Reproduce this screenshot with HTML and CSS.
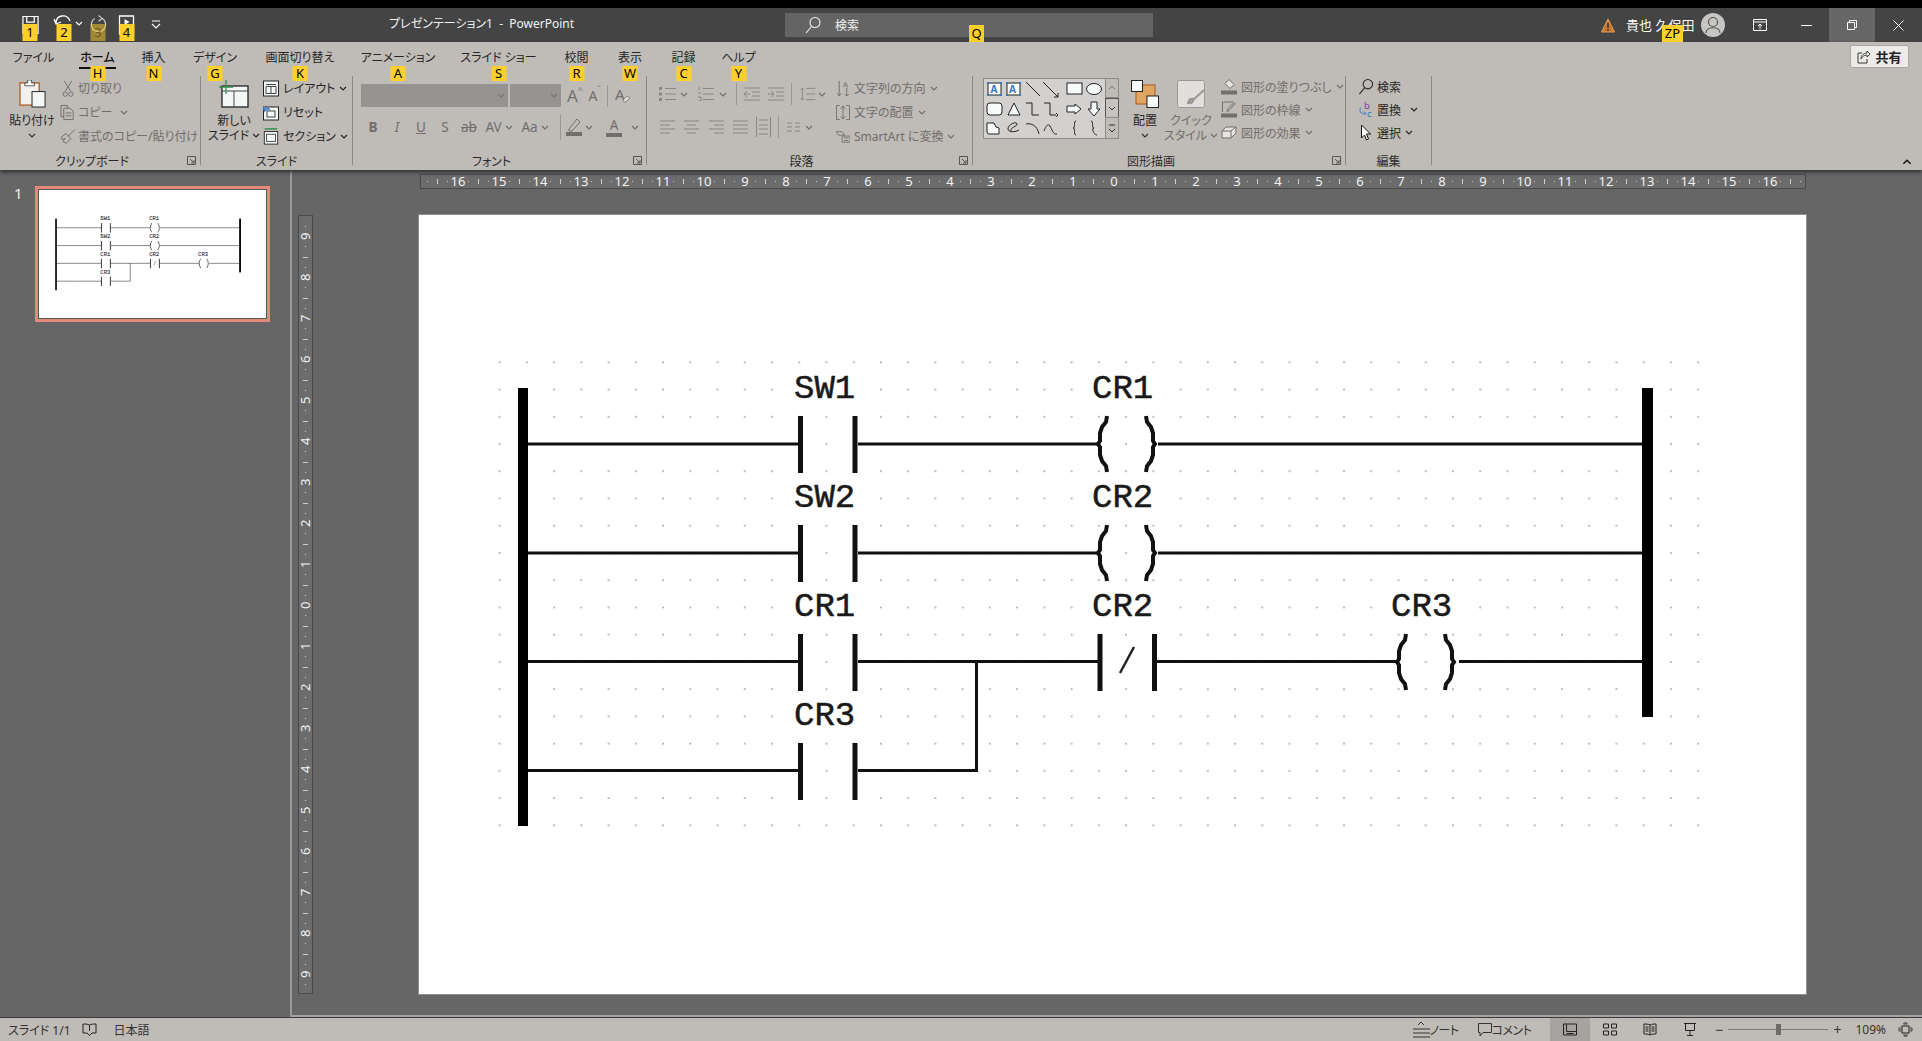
FILE: index.html
```html
<!DOCTYPE html>
<html lang="ja">
<head>
  <meta charset="UTF-8" />
  <title>プレゼンテーション1 - PowerPoint</title>
  <link rel="stylesheet" href="styles.css">
</head>
<body>

  <!-- icon sprite -->
  <svg class="sprite" xmlns="http://www.w3.org/2000/svg">
    <symbol id="ch" viewBox="0 0 8 5"><path d="M1 1l3 3 3-3" fill="none" stroke="currentColor" stroke-width="1.2"/></symbol>
    <symbol id="launch" viewBox="0 0 9 9"><path d="M.5 8.500V.5h8v8zM3 3l4 4M7 4v3H4" fill="none" stroke="currentColor"/></symbol>
    <symbol id="save" viewBox="0 0 18 20"><path d="M1 1h16v18H1zM5 1v6h8V1" fill="none" stroke="#fff" stroke-width="1.3"/></symbol>
    <symbol id="undo" viewBox="0 0 20 16"><path d="M3 11C3 3 14 1 17 9M1 7l2 5 5-2" fill="none" stroke="#fff" stroke-width="1.3"/></symbol>
    <symbol id="redo" viewBox="0 0 18 20"><path d="M5 3C-1 7 1 17 9 17S19 7 13 3M9 0l4 3-4 3" fill="none" stroke="#ccc" stroke-width="1.2"/></symbol>
    <symbol id="start" viewBox="0 0 16 20"><path d="M1 1h14v18H1z" fill="none" stroke="#fff" stroke-width="1.3"/><path d="M6 4l5 3-5 3z" fill="#fff"/></symbol>
    <symbol id="more" viewBox="0 0 10 10"><path d="M1 1h8M1 4l4 4 4-4" fill="none" stroke="#fff" stroke-width="1.2"/></symbol>
    <symbol id="mag" viewBox="0 0 16 18"><circle cx="10" cy="6.500" r="5" fill="none" stroke="currentColor" stroke-width="1.1"/><path d="M6.500 10.500L1 17" stroke="currentColor" stroke-width="1.1"/></symbol>
    <symbol id="warn" viewBox="0 0 14 15"><path d="M7 1l6.500 13H.5z" fill="#c9772f" stroke="#e39a52"/><path d="M7 5v5M7 11v2" stroke="#333" stroke-width="1.5"/></symbol>
    <symbol id="avatar" viewBox="0 0 24 24"><circle cx="12" cy="12" r="12" fill="#c8c6c4"/><circle cx="12" cy="9" r="4.500" fill="none" stroke="#555" stroke-width="1.2"/><path d="M5 20c0-7 14-7 14 0" fill="none" stroke="#555" stroke-width="1.2"/></symbol>
    <symbol id="ropt" viewBox="0 0 14 12"><path d="M.5.5h13v11H.5zM.5 3h13M7 10V5M5 7l2-2 2 2" fill="none" stroke="#fff"/></symbol>
    <symbol id="rest" viewBox="0 0 10 10"><path d="M.5 2.500h7v7h-7zM2.500 2.500v-2h7v7h-2" fill="none" stroke="#fff"/></symbol>
    <symbol id="close" viewBox="0 0 11 11"><path d="M.5.5l10 10M10.500.5l-10 10" stroke="#fff" fill="none"/></symbol>
    <symbol id="share" viewBox="0 0 13 14"><path d="M5 3H1v10h9V9" fill="none" stroke="#333"/><path d="M4 9c0-4 3-6 6-6V1l3 3-3 3V5C7 5 5 7 4 9z" fill="none" stroke="#333" stroke-width=".9"/></symbol>

    <symbol id="paste" viewBox="0 0 28 29"><rect x="1" y="3" width="20" height="23" fill="#f3f1ef" stroke="#b2692f" stroke-width="1.5"/><path d="M6 6V3h3V0h4v3h3v3z" fill="#fff" stroke="#333" stroke-width=".8"/><rect x="13.500" y="12" width="13.500" height="16" fill="#f3f7f6" stroke="#222"/></symbol>
    <symbol id="cut" viewBox="0 0 12 18"><path d="M2 1l7 11M10 1L3 12" stroke="currentColor" fill="none"/><circle cx="3" cy="15" r="2.300" fill="none" stroke="currentColor"/><circle cx="9" cy="15" r="2.300" fill="none" stroke="currentColor"/></symbol>
    <symbol id="copy" viewBox="0 0 17 17"><path d="M4 13H1V1h7v3M4 4h7l3 3v9H4z" fill="none" stroke="currentColor"/><path d="M6 9h6M6 12h6" stroke="currentColor"/></symbol>
    <symbol id="brush" viewBox="0 0 16 16"><path d="M15 1L8 8M1 9l5-4 5 5-5 5-3-2 2-3-3 1z" fill="none" stroke="currentColor"/></symbol>
    <symbol id="newslide" viewBox="0 0 30 28"><rect x="3" y="6" width="26" height="21" fill="#f3f7f6" stroke="#222" stroke-width="1.300"/><path d="M3 11h26M15 11v16" stroke="#444" fill="none"/><path d="M7 0v14M0 7h14" stroke="#2f8f4a" stroke-width="1.300" fill="none"/></symbol>
    <symbol id="layout" viewBox="0 0 16 16"><rect x=".5" y=".5" width="15" height="15" fill="#f3f7f6" stroke="#222"/><path d="M3 4h10M3 6v7h10V6zM8 6v7" stroke="#444" fill="none"/></symbol>
    <symbol id="reset" viewBox="0 0 16 17"><rect x=".5" y="3" width="15" height="13" fill="#f3f7f6" stroke="#222"/><rect x="4" y="7" width="8" height="6" fill="none" stroke="#444"/><path d="M7 6C4 2 2 4 1.500 6M0 3l1.500 4L5 5" fill="none" stroke="#3b78c2" stroke-width="1.400"/></symbol>
    <symbol id="section" viewBox="0 0 16 19"><path d="M1 1h14" stroke="#2f8f4a" stroke-width="1.600"/><rect x=".5" y="4" width="15" height="14" fill="#f3f7f6" stroke="#222"/><rect x="3" y="7" width="10" height="8" fill="none" stroke="#444"/></symbol>
    <symbol id="clearf" viewBox="0 0 15 17"><text x="0" y="13" font-size="15" font-family="Noto Sans" fill="currentColor">A</text><path d="M8 13l4-4 3 2-4 4H9z" fill="#d9d6d3" stroke="currentColor" stroke-width=".7"/></symbol>
    <symbol id="hl" viewBox="0 0 16 18"><path d="M3 11L11 1l3 3-8 9H3z" fill="none" stroke="currentColor"/><rect y="14" width="16" height="4" fill="currentColor"/></symbol>

    <symbol id="bul" viewBox="0 0 17 14"><path d="M6 1.500h11M6 7h11M6 12.500h11" stroke="currentColor" fill="none"/><path d="M0 0h3v3H0zM0 5.500h3v3H0zM0 11h3v3H0z" fill="currentColor"/></symbol>
    <symbol id="num" viewBox="0 0 16 14"><path d="M5 1.500h11M5 7h11M5 12.500h11M1 0v3M0 6h3M0 10h3v4H0" stroke="currentColor" fill="none"/></symbol>
    <symbol id="indl" viewBox="0 0 16 14"><path d="M0 1h16M8 5h8M8 9h8M0 13h16M6 7H0M3 4L0 7l3 3" stroke="currentColor" fill="none"/></symbol>
    <symbol id="indr" viewBox="0 0 16 14"><path d="M0 1h16M8 5h8M8 9h8M0 13h16M0 7h6M3 4l3 3-3 3" stroke="currentColor" fill="none"/></symbol>
    <symbol id="lsp" viewBox="0 0 17 15"><path d="M7 1.500h10M7 7.500h10M7 13.500h10M3 1v13M1 3l2-2 2 2M1 12l2 2 2-2" stroke="currentColor" fill="none"/></symbol>
    <symbol id="al" viewBox="0 0 15 14"><path d="M0 1h15M0 5h10M0 9h15M0 13h10" stroke="currentColor" fill="none"/></symbol>
    <symbol id="ac" viewBox="0 0 15 14"><path d="M0 1h15M3 5h9M0 9h15M3 13h9" stroke="currentColor" fill="none"/></symbol>
    <symbol id="ar" viewBox="0 0 15 14"><path d="M0 1h15M5 5h10M0 9h15M5 13h10" stroke="currentColor" fill="none"/></symbol>
    <symbol id="aj" viewBox="0 0 15 14"><path d="M0 1h15M0 5h15M0 9h15M0 13h15" stroke="currentColor" fill="none"/></symbol>
    <symbol id="dist" viewBox="0 0 15 20"><path d="M.5 0v20M14.500 0v20M3 3h9M3 8h9M3 12h9M3 17h9" stroke="currentColor" fill="none"/></symbol>
    <symbol id="cols" viewBox="0 0 13 10"><path d="M0 1h5M8 1h5M0 5h5M8 5h5M0 9h5M8 9h5" stroke="currentColor" fill="none"/></symbol>
    <symbol id="tdir" viewBox="0 0 14 18"><path d="M3 1v15M1 14l2 3 2-3M11 8v9M9 15l2 2 2-2" stroke="currentColor" fill="none"/><text x="7" y="7" font-size="8" font-family="Noto Sans" fill="currentColor">A</text></symbol>
    <symbol id="talign" viewBox="0 0 15 16"><path d="M4 .5H.5v15H4M11 .5h3.500v15H11M7.500 1v14M5 4l2.500-3L10 4M5 12l2.500 3 2.500-3" stroke="currentColor" fill="none"/></symbol>
    <symbol id="sart" viewBox="0 0 16 13"><path d="M0 1h7l3 4H3zM7 6h9v7H7zM9 8h5M9 11h5" stroke="currentColor" fill="none"/></symbol>

    <symbol id="arrange" viewBox="0 0 28 28"><rect x="5" y="5" width="19" height="19" fill="#dfa562" stroke="#a9591f"/><rect x=".5" y=".5" width="11" height="11" fill="#f7fbfa" stroke="#222"/><rect x="16" y="16" width="11.500" height="11.500" fill="#f7fbfa" stroke="#222"/></symbol>
    <symbol id="quick" viewBox="0 0 28 28"><rect x=".5" y=".5" width="27" height="27" rx="2" fill="#e0dfdd" stroke="#999"/><path d="M27 10L16 20M11 23c1-4 3-5 6-4-1 3-3 5-6 4z" stroke="#9a9896" stroke-width="2" fill="#aaa"/></symbol>
    <symbol id="fill" viewBox="0 0 16 16"><path d="M8 1l5 5-4 4-5-5z" fill="#e6e4e2" stroke="currentColor"/><rect y="12" width="16" height="4" fill="currentColor"/></symbol>
    <symbol id="outl" viewBox="0 0 16 16"><path d="M1.500 10.500V.5H12M14 2L8 9 6 10l1-3 6-6z" fill="none" stroke="currentColor"/><rect y="12" width="16" height="4" fill="currentColor"/></symbol>
    <symbol id="effect" viewBox="0 0 16 13"><path d="M1 5l4-4h10v6l-5 5H1z" fill="#e6e4e2" stroke="currentColor"/><path d="M1 5h9v7M10 5l5-4" fill="none" stroke="currentColor"/></symbol>
    <symbol id="rep" viewBox="0 0 16 18"><path d="M3 7C1 7 1 13 4 13h3M6 11l2 2-2 2" stroke="#3b78c2" fill="none"/><text x="6" y="8" font-size="10" font-family="Noto Sans" fill="#8e3fa8">b</text><text x="9" y="17" font-size="10" font-family="Noto Sans" fill="#3b78c2">c</text></symbol>
    <symbol id="sel" viewBox="0 0 11 17"><path d="M1 1v13l3-3 2 5 2-1-2-5h4z" fill="#fff" stroke="#111"/></symbol>

    <symbol id="book" viewBox="0 0 15 13"><path d="M7.500 2C6 1 3 1 1 1v9h4l2.500 2.500L10 10h4V1c-2 0-5 0-6.500 1zM7.500 2v6" fill="none" stroke="#222"/></symbol>
    <symbol id="notes" viewBox="0 0 17 16"><path d="M5 3l3-3 3 3M0 7h17M0 11h17M0 15h17" fill="none" stroke="#333"/></symbol>
    <symbol id="cmt" viewBox="0 0 14 14"><path d="M.5.5h13v9H5l-3 3.500V9.500H.5z" fill="none" stroke="#333"/></symbol>
    <symbol id="normal" viewBox="0 0 14 12"><path d="M.5.5h13v11H.5zM3.500 1v7h10M3.500 10h7" fill="none" stroke="#222"/></symbol>
    <symbol id="sorter" viewBox="0 0 14 12"><path d="M.5.5h5v4h-5zM8.500.5h5v4h-5zM.5 7.500h5v4h-5zM8.500 7.500h5v4h-5z" fill="none" stroke="#222"/></symbol>
    <symbol id="reader" viewBox="0 0 13 13"><path d="M6.500 2C5 1 2 1 .5 1v10c2 0 4 0 6 1 2-1 4-1 6-1V1C11 1 8 1 6.500 2zM6.500 2v10M2 4h3M2 6h3M2 8h3M8 4h3M8 6h3M8 8h3" fill="none" stroke="#222"/></symbol>
    <symbol id="show" viewBox="0 0 13 13"><path d="M.5.5h12M2 .5v7h9v-7M6.500 7.500V12M3.500 12.500h6" fill="none" stroke="#222"/></symbol>
    <symbol id="fit" viewBox="0 0 15 15"><path d="M7.500 0l2 2h-4zM7.500 15l2-2h-4zM0 7.500l2-2v4zM15 7.500l-2-2v4z" fill="none" stroke="#222" stroke-width=".8"/><rect x="4" y="4" width="7" height="7" fill="none" stroke="#222"/></symbol>
  </svg>

  <header class="titlebar">
    <div class="qat">
      <span class="qat-item"><svg class="i-save"><use href="#save"/></svg><b class="tip">1</b></span>
      <span class="qat-item"><svg class="i-undo"><use href="#undo"/></svg><svg class="ch qat-ch"><use href="#ch"/></svg><b class="tip">2</b></span>
      <span class="qat-item"><svg class="i-save"><use href="#redo"/></svg><b class="tip tip-dim">3</b></span>
      <span class="qat-item"><svg class="i-save"><use href="#start"/></svg><b class="tip">4</b></span>
      <span class="qat-item"><svg class="i-more"><use href="#more"/></svg></span>
    </div>
    <div class="doc-title">プレゼンテーション1&nbsp; - &nbsp;PowerPoint</div>
    <div class="searchbox"><svg class="i-mag"><use href="#mag"/></svg><span>検索</span><b class="tip tip-q">Q</b></div>
    <div class="account">
      <svg class="i-warn"><use href="#warn"/></svg>
      <span class="user">貴也 久保田<b class="tip tip-zp">ZP</b></span>
      <svg class="i-avatar"><use href="#avatar"/></svg>
    </div>
    <div class="winbtn"><svg class="i-ropt"><use href="#ropt"/></svg></div>
    <div class="winbtn"><span class="min-line"></span></div>
    <div class="winbtn winbtn-on"><svg class="i-rest"><use href="#rest"/></svg></div>
    <div class="winbtn"><svg class="i-close"><use href="#close"/></svg></div>
  </header>

  <section class="ribbon">
    <div class="tabrow">
      <nav class="tabs">
        <a>ファイル</a>
        <a class="tab-on"><span>ホーム</span><b class="tip tip-tab">H</b></a>
        <a>挿入<b class="tip tip-tab">N</b></a>
        <a>デザイン<b class="tip tip-tab">G</b></a>
        <a>画面切り替え<b class="tip tip-tab">K</b></a>
        <a>アニメーション<b class="tip tip-tab">A</b></a>
        <a>スライド ショー<b class="tip tip-tab">S</b></a>
        <a>校閲<b class="tip tip-tab">R</b></a>
        <a>表示<b class="tip tip-tab">W</b></a>
        <a>記録<b class="tip tip-tab">C</b></a>
        <a>ヘルプ<b class="tip tip-tab">Y</b></a>
      </nav>
      <button class="share"><svg class="i-share"><use href="#share"/></svg>共有</button>
    </div>

    <div class="groups">
      <div class="group g-clip">
        <div class="gbody">
          <div class="big big-paste">
            <svg class="i-paste"><use href="#paste"/></svg>
            <span>貼り付け</span>
            <svg class="ch"><use href="#ch"/></svg>
          </div>
          <div class="rows rows-clip dis">
            <div class="row"><svg class="ic"><use href="#cut"/></svg>切り取り</div>
            <div class="row"><svg class="ic"><use href="#copy"/></svg>コピー<svg class="ch ml-8"><use href="#ch"/></svg></div>
            <div class="row"><svg class="ic"><use href="#brush"/></svg>書式のコピー/貼り付け</div>
          </div>
        </div>
        <div class="gfoot"><span>クリップボード</span><svg class="launch"><use href="#launch"/></svg></div>
      </div>

      <div class="group g-slide">
        <div class="gbody">
          <div class="big big-new">
            <svg class="i-new"><use href="#newslide"/></svg>
            <span>新しい</span>
            <span>スライド<svg class="ch ml-3"><use href="#ch"/></svg></span>
          </div>
          <div class="rows rows-slide">
            <div class="row"><svg class="ic"><use href="#layout"/></svg>レイアウト<svg class="ch ml-4"><use href="#ch"/></svg></div>
            <div class="row"><svg class="ic"><use href="#reset"/></svg>リセット</div>
            <div class="row"><svg class="ic"><use href="#section"/></svg>セクション<svg class="ch ml-4"><use href="#ch"/></svg></div>
          </div>
        </div>
        <div class="gfoot gfoot-plain"><span>スライド</span></div>
      </div>

      <div class="group g-font">
        <div class="gbody gbody-col dis">
          <div class="font-r1">
            <div class="combo combo-name"><svg class="ch"><use href="#ch"/></svg></div>
            <div class="combo combo-size"><svg class="ch"><use href="#ch"/></svg></div>
            <span class="growA ml-6">A<sup>^</sup></span>
            <span class="growA growA-s ml-6">A<sup>ˇ</sup></span>
            <i class="vsep vsep-t ml-6"></i>
            <svg class="i-clear ml-7"><use href="#clearf"/></svg>
          </div>
          <div class="font-r2">
            <span class="fb fb-b">B</span>
            <span class="fb fb-i">I</span>
            <span class="fb fb-u">U</span>
            <span class="fb">S</span>
            <span class="fb fb-st">ab</span>
            <span class="fb fb-w">AV<svg class="ch ml-3"><use href="#ch"/></svg></span>
            <span class="fb fb-w">Aa<svg class="ch ml-3"><use href="#ch"/></svg></span>
            <i class="vsep ml-7"></i>
            <span class="fb fb-hl"><svg class="i-hl"><use href="#hl"/></svg><svg class="ch ml-3"><use href="#ch"/></svg></span>
            <span class="fb fb-col"><span class="uA">A</span><svg class="ch ml-9"><use href="#ch"/></svg></span>
          </div>
        </div>
        <div class="gfoot"><span>フォント</span><svg class="launch"><use href="#launch"/></svg></div>
      </div>

      <div class="group g-para">
        <div class="gbody dis">
          <div class="para-left">
            <div class="para-r">
              <svg class="i-17 ml-12"><use href="#bul"/></svg><svg class="ch ml-4"><use href="#ch"/></svg>
              <svg class="i-16 ml-10"><use href="#num"/></svg><svg class="ch ml-5"><use href="#ch"/></svg>
              <i class="vsep vsep-t ml-9"></i>
              <svg class="i-16 ml-7"><use href="#indl"/></svg>
              <svg class="i-16 ml-8"><use href="#indr"/></svg>
              <i class="vsep vsep-t ml-7"></i>
              <svg class="i-17 ml-7"><use href="#lsp"/></svg><svg class="ch ml-2"><use href="#ch"/></svg>
            </div>
            <div class="para-r para-r2">
              <svg class="i-15 ml-13"><use href="#al"/></svg>
              <svg class="i-15 ml-9"><use href="#ac"/></svg>
              <svg class="i-15 ml-10"><use href="#ar"/></svg>
              <svg class="i-15 ml-9"><use href="#aj"/></svg>
              <svg class="i-dist ml-8"><use href="#dist"/></svg>
              <i class="vsep vsep-t ml-7"></i>
              <svg class="i-cols ml-8"><use href="#cols"/></svg><svg class="ch ml-5"><use href="#ch"/></svg>
            </div>
          </div>
          <div class="rows rows-para">
            <div class="row"><svg class="ic"><use href="#tdir"/></svg>文字列の方向<svg class="ch ml-4"><use href="#ch"/></svg></div>
            <div class="row"><svg class="ic"><use href="#talign"/></svg>文字の配置<svg class="ch ml-4"><use href="#ch"/></svg></div>
            <div class="row"><svg class="ic"><use href="#sart"/></svg>SmartArt に変換<svg class="ch ml-4"><use href="#ch"/></svg></div>
          </div>
        </div>
        <div class="gfoot"><span>段落</span><svg class="launch"><use href="#launch"/></svg></div>
      </div>

      <div class="group g-draw">
        <div class="gbody">
          <svg class="gallery" viewBox="0 0 136 61">
            <rect x=".5" y=".5" width="122" height="60" fill="#d3d1cf" stroke="#8d8a88"/>
            <g fill="none" stroke="#8d8a88">
              <rect x="122.500" y=".5" width="13" height="19"/>
              <rect x="122.500" y="20.500" width="13" height="19" fill="#c6c3c0" stroke="#555"/>
              <rect x="122.500" y="39.500" width="13" height="21"/>
            </g>
            <g fill="none" stroke="#333">
              <path d="M126 11l3-3 3 3" stroke="#777"/>
              <path d="M126 29l3 3 3-3"/>
              <path d="M126 47h6M126 51l3 3 3-3"/>
            </g>
            <g fill="#f7fbfa" stroke="#222">
              <rect x="5" y="5" width="13" height="12"/>
              <rect x="24" y="5" width="13" height="12"/>
              <path d="M43 4l14 14M60 4l15 15M75 19v-4M75 19h-4" fill="none"/>
              <rect x="84" y="5" width="15" height="11"/>
              <ellipse cx="111" cy="11" rx="7.500" ry="5.500"/>
              <rect x="4" y="25" width="15" height="12" rx="3"/>
              <path d="M31 25l6 12H25z"/>
              <path d="M43 25h6v12h7M61 25h6v12h6M73 35l2 2-2 2" fill="none"/>
              <path d="M84 28h8v-2l6 5-6 5v-2h-8z"/>
              <path d="M108 24h6v7h3l-6 7-6-7h3z"/>
              <path d="M4 51v-6h7l2 4 3 1v6H6a2 2 0 0 1-2-2z"/>
              <path d="M36 52c-3 2-11 3-11-1 0-5 9-8 9-5s-7 3-6 7" fill="none"/>
              <path d="M43 46c5-1 11 1 13 10M61 53c2-5 4-8 6-5s3 9 7 8" fill="none"/>
              <path d="M93 43c-3 0 0 7-3 7 3 0 0 7 3 7" fill="none"/>
              <path d="M108 43c3 0 0 7 3 7-3 0 0 7 3 7" fill="none"/>
            </g>
            <g fill="#3b78c2">
              <path d="M4 4h2v2H4zM17 4h2v2h-2zM4 16h2v2H4zM17 16h2v2h-2zM23 4h2v2h-2zM36 4h2v2h-2zM23 16h2v2h-2zM36 16h2v2h-2z"/>
              <text x="7.500" y="15" font-size="10" font-weight="700" font-family="Noto Sans">A</text>
              <text x="26" y="15" font-size="10" font-weight="700" font-family="Noto Sans">A</text>
            </g>
          </svg>
          <div class="big big-arr">
            <svg class="i-big"><use href="#arrange"/></svg>
            <span>配置</span>
            <svg class="ch"><use href="#ch"/></svg>
          </div>
          <div class="big big-quick dis">
            <svg class="i-big"><use href="#quick"/></svg>
            <span>クイック</span>
            <span>スタイル<svg class="ch ml-3"><use href="#ch"/></svg></span>
          </div>
          <div class="rows rows-draw dis">
            <div class="row"><svg class="ic"><use href="#fill"/></svg>図形の塗りつぶし<svg class="ch ml-4"><use href="#ch"/></svg></div>
            <div class="row"><svg class="ic"><use href="#outl"/></svg>図形の枠線<svg class="ch ml-4"><use href="#ch"/></svg></div>
            <div class="row"><svg class="ic"><use href="#effect"/></svg>図形の効果<svg class="ch ml-4"><use href="#ch"/></svg></div>
          </div>
        </div>
        <div class="gfoot"><span>図形描画</span><svg class="launch"><use href="#launch"/></svg></div>
      </div>

      <div class="group g-edit">
        <div class="gbody">
          <div class="rows rows-edit">
            <div class="row"><svg class="ic"><use href="#mag"/></svg>検索</div>
            <div class="row"><svg class="ic"><use href="#rep"/></svg>置換<svg class="ch ml-9"><use href="#ch"/></svg></div>
            <div class="row"><svg class="ic"><use href="#sel"/></svg>選択<svg class="ch ml-4"><use href="#ch"/></svg></div>
          </div>
        </div>
        <div class="gfoot gfoot-plain"><span>編集</span></div>
      </div>

      <svg class="ch collapse"><use href="#ch"/></svg>
    </div>
  </section>

  <main class="workspace">
    <aside class="pane">
      <span class="pane-num">1</span>
      <div class="thumb">
        <svg viewBox="419 215 1387 779"><rect x="419" y="215" width="1387" height="779" fill="#fff"/><use href="#ladder"/></svg>
      </div>
    </aside>

    <div class="editor">
      <div class="hruler">
        <span>16</span><span>15</span><span>14</span><span>13</span><span>12</span><span>11</span><span>10</span><span>9</span><span>8</span><span>7</span><span>6</span><span>5</span><span>4</span><span>3</span><span>2</span><span>1</span><span>0</span><span>1</span><span>2</span><span>3</span><span>4</span><span>5</span><span>6</span><span>7</span><span>8</span><span>9</span><span>10</span><span>11</span><span>12</span><span>13</span><span>14</span><span>15</span><span>16</span>
      </div>
      <div class="stage">
        <div class="vruler">
          <span>9</span><span>8</span><span>7</span><span>6</span><span>5</span><span>4</span><span>3</span><span>2</span><span>1</span><span>0</span><span>1</span><span>2</span><span>3</span><span>4</span><span>5</span><span>6</span><span>7</span><span>8</span><span>9</span>
        </div>
        <div class="slide">
          <svg viewBox="419 215 1387 779">
            <defs>
              <pattern id="dots" x="498.600" y="361.300" width="27.240" height="27.240" patternUnits="userSpaceOnUse">
                <rect width="2" height="2" fill="#bcbcbc"/>
              </pattern>
              <path id="contact" d="M0-28V29M54.500-28V29" fill="none" stroke="#111" stroke-width="5"/>
              <path id="coil" d="M9-28 8-22 4-17 2-11V-3L0 0 2 3V11L4 17 8 22 9 28M48-28 49-22 53-17 55-11V-3L57 0 55 3V11L53 17 49 22 48 28" fill="none" stroke="#111" stroke-width="4"/>
            </defs>
            <g id="ladder">
              <rect x="498" y="360" width="1202" height="468" fill="url(#dots)"/>
              <g fill="#fff">
                <rect x="790" y="377" width="74" height="32"/>
                <rect x="1088" y="377" width="72" height="32"/>
                <rect x="790" y="486" width="74" height="32"/>
                <rect x="1088" y="486" width="72" height="32"/>
                <rect x="790" y="595" width="74" height="32"/>
                <rect x="1088" y="595" width="72" height="32"/>
                <rect x="1385" y="595" width="76" height="32"/>
                <rect x="790" y="703" width="74" height="32"/>
              </g>
              <rect x="518" y="388" width="10" height="438" fill="#000"/>
              <rect x="1642" y="388" width="11" height="329" fill="#000"/>
              <path d="M528 444H798M858 444H1098M1158 444H1642M528 553H798M858 553H1098M1158 553H1642M528 661.500H798M858 661.500H1098M1157 661.500H1397M1459 661.500H1642M528 770.500H798M858 770.500H976.500V661.500" fill="none" stroke="#111" stroke-width="3"/>
              <use href="#contact" x="800.500" y="444"/>
              <use href="#contact" x="800.500" y="553"/>
              <use href="#contact" x="800.500" y="662"/>
              <use href="#contact" x="800.500" y="771"/>
              <use href="#contact" x="1100" y="662"/>
              <use href="#coil" x="1098" y="444"/>
              <use href="#coil" x="1098" y="553"/>
              <use href="#coil" x="1397" y="662"/>
              <path d="M1120 673L1134 647" stroke="#222" stroke-width="2.500"/>
              <g class="rung-label">
                <text x="794" y="398">SW1</text>
                <text x="1092" y="398">CR1</text>
                <text x="794" y="507">SW2</text>
                <text x="1092" y="507">CR2</text>
                <text x="794" y="616">CR1</text>
                <text x="1092" y="616">CR2</text>
                <text x="1391" y="616">CR3</text>
                <text x="794" y="725">CR3</text>
              </g>
            </g>
          </svg>
        </div>
      </div>
    </div>
  </main>

  <footer class="statusbar">
    <span class="st-text ml-8">スライド 1/1</span>
    <svg class="i-book"><use href="#book"/></svg>
    <span class="st-text ml-17">日本語</span>
    <div class="st-right">
      <svg class="i-notes"><use href="#notes"/></svg>
      <span class="st-text st-tight">ノート</span>
      <svg class="i-cmt"><use href="#cmt"/></svg>
      <span class="st-text st-tight">コメント</span>
      <span class="viewbtn viewbtn-on"><svg class="i-view"><use href="#normal"/></svg></span>
      <span class="viewbtn"><svg class="i-view"><use href="#sorter"/></svg></span>
      <span class="viewbtn"><svg class="i-view"><use href="#reader"/></svg></span>
      <span class="viewbtn"><svg class="i-view"><use href="#show"/></svg></span>
      <span class="zoom-sign">−</span>
      <div class="zoom-track"><i></i></div>
      <span class="zoom-sign">+</span>
      <span class="st-text zoom-val">109%</span>
      <svg class="i-fit"><use href="#fit"/></svg>
    </div>
  </footer>

</body>
</html>
```

FILE: styles.css
```css
* {
  box-sizing: border-box;
}

html, body {
  margin: 0;
  height: 100%;
}

body {
  font-family: "Noto Sans", "Noto Sans CJK JP", sans-serif;
  font-feature-settings: "palt";
  font-size: 12px;
  color: #262626;
  background-color: #000;
  padding-top: 8px;
  display: flex;
  flex-direction: column;
  overflow: hidden;
}

.sprite {
  display: none;
}

svg {
  flex: none;
  display: block;
}

.ml-2 { margin-left: 2px; }
.ml-3 { margin-left: 3px; }
.ml-4 { margin-left: 4px; }
.ml-5 { margin-left: 5px; }
.ml-6 { margin-left: 6px; }
.ml-7 { margin-left: 7px; }
.ml-8 { margin-left: 8px; }
.ml-9 { margin-left: 9px; }
.ml-10 { margin-left: 10px; }
.ml-12 { margin-left: 12px; }
.ml-13 { margin-left: 13px; }
.ml-17 { margin-left: 17px; }

.ch {
  width: 8px;
  height: 5px;
}

/* key tips */
.tip {
  position: absolute;
  top: 16px;
  left: 50%;
  transform: translateX(-50%);
  width: 15px;
  height: 17px;
  background-color: #ffd02b;
  color: #000;
  font-size: 13px;
  font-weight: 400;
  line-height: 17px;
  text-align: center;
  z-index: 5;
}

.tip-dim {
  background-color: rgba(255, 208, 43, 0.5);
  color: rgba(0, 0, 0, 0.4);
}

.tip-q {
  top: 12px;
  left: 184px;
  transform: none;
}

.tip-zp {
  top: 8px;
  left: 36px;
  width: 21px;
  transform: none;
}

.tip-tab {
  top: 24px;
  height: 15px;
  line-height: 15px;
}

/* title bar */
.titlebar {
  height: 34px;
  flex: none;
  display: flex;
  align-items: center;
  background-color: #444;
  color: #fff;
}

.qat {
  display: grid;
  grid-template-columns: 34px 34px 34px 23px 36px;
  height: 34px;
  margin-left: 13px;
}

.qat-item {
  position: relative;
  display: flex;
  align-items: center;
  justify-content: center;
}

.i-save { width: 17px; height: 20px; }
.i-undo { width: 20px; height: 16px; margin-top: -10px; }
.i-more { width: 10px; height: 10px; }

.qat-ch {
  color: #fff;
  margin: -4px -8px 0 2px;
}

.doc-title {
  width: 396px;
  margin: -4px 0 0 215px;
  font-size: 12px;
  color: #f2f2f2;
}

.searchbox {
  position: relative;
  width: 368px;
  height: 24px;
  display: flex;
  align-items: center;
  background-color: #646464;
  color: #f0f0f0;
  padding-left: 20px;
}

.i-mag { width: 16px; height: 18px; margin-right: 14px; }

.account {
  display: flex;
  align-items: center;
  margin-left: auto;
  margin-right: 12px;
}

.i-warn { width: 14px; height: 15px; }
.i-avatar { width: 24px; height: 24px; margin-left: 11px; }

.user {
  position: relative;
  width: 64px;
  margin-left: 11px;
  font-size: 13px;
  white-space: nowrap;
  line-height: 16px;
}

.winbtn {
  width: 46px;
  height: 34px;
  display: flex;
  align-items: center;
  justify-content: center;
}

.winbtn:last-child {
  margin-right: 1px;
}

.winbtn-on {
  background-color: #666;
}

.min-line {
  width: 11px;
  height: 1px;
  background-color: #fff;
}

.i-ropt { width: 14px; height: 12px; }
.i-rest { width: 10px; height: 10px; }
.i-close { width: 11px; height: 11px; }

/* ribbon */
.ribbon {
  position: relative;
  height: 128px;
  flex: none;
  background-color: #bfbbb7;
  box-shadow: 0 2px 4px #2e2e2e;
  z-index: 2;
}

.tabrow {
  height: 34px;
  display: flex;
}

.tabs {
  display: grid;
  grid-template-columns: 67px 61px 51px 72px 98px 98px 103px 53px 54px 53px 57px;
}

.tabs a {
  position: relative;
  height: 32px;
  line-height: 32px;
  text-align: center;
  white-space: nowrap;
}

.tab-on {
  font-weight: 500;
  color: #111;
}

.tab-on span {
  display: inline-block;
  line-height: 16px;
  padding: 0 1px 1px;
  border-bottom: 2px solid #111;
}

.share {
  margin: 3px 13px 0 auto;
  width: 59px;
  height: 23px;
  display: flex;
  align-items: center;
  justify-content: center;
  gap: 5px;
  background-color: #ecebe9;
  border: 1px solid #a9a6a3;
  border-radius: 2px;
  font: 700 13px "Noto Sans", "Noto Sans CJK JP", sans-serif;
  color: #222;
  padding: 0;
}

.i-share { width: 13px; height: 14px; }

.groups {
  display: flex;
  height: 89px;
}

.group {
  height: 89px;
  border-right: 1px solid #8b8885;
  display: flex;
  flex-direction: column;
}

.g-clip { width: 201px; }
.g-slide { width: 152px; }
.g-font { width: 294px; }
.g-para { width: 326px; }
.g-draw { width: 373px; }
.g-edit { width: 86px; }

.gbody {
  height: 77px;
  flex: none;
  display: flex;
  white-space: nowrap;
}

.gbody-col {
  flex-direction: column;
}

.gfoot {
  display: flex;
  align-items: center;
  height: 15px;
  flex: none;
  color: #2b2b2b;
}

.gfoot span {
  flex: 1;
  text-align: center;
}

.launch {
  width: 9px;
  height: 9px;
  margin: 0 4px 0 3px;
  color: #555;
}

.dis {
  color: #716e6c;
}

.big {
  display: flex;
  flex-direction: column;
  align-items: center;
  line-height: 15px;
  padding-top: 4px;
}

.big span {
  display: flex;
  align-items: center;
}

.big > svg:first-child {
  margin-bottom: 5px;
}

.big > .ch {
  margin-top: 5px;
  color: #333;
}

.big-paste {
  width: 56px;
  margin-left: 4px;
}

.i-paste { width: 27px; height: 28px; }

.big-new {
  width: 58px;
  margin-left: 4px;
}

.i-new { width: 30px; height: 28px; }

.i-big { width: 28px; height: 28px; }

.big-arr {
  width: 40px;
  margin-left: 6px;
}

.big-quick {
  width: 52px;
}

.rows {
  display: flex;
  flex-direction: column;
}

.row {
  height: 24px;
  display: flex;
  align-items: center;
}

.rows .ic {
  width: 16px;
  height: 17px;
}

.rows-clip .ic { margin-right: 2px; }
.rows-slide .ic { margin-right: 4px; }
.rows-para .ic { margin-right: 4px; width: 14px; }
.rows-draw .ic { margin-right: 4px; }
.rows-edit .ic { margin-right: 3px; }

.rows-clip .row:first-child .ic {
  width: 12px;
  margin: 0 4px 0 2px;
}

.rows-draw .row,
.rows-edit .row {
  height: 23px;
}

.rows-draw { margin: -1px 0 0 4px; }
.rows-edit { margin: -1px 0 0 12px; }

/* font group */
.font-r1 {
  display: flex;
  align-items: center;
  height: 23px;
  margin: 8px 0 0 8px;
}

.combo {
  height: 23px;
  background-color: #969492;
  display: flex;
  align-items: center;
  justify-content: flex-end;
  padding-right: 3px;
  margin-right: 2px;
  color: #777;
}

.combo-name { width: 147px; }
.combo-size { width: 51px; margin-right: 0; }

.growA {
  font-size: 17px;
  line-height: 20px;
  display: flex;
}

.growA sup {
  font-size: 8px;
  line-height: 8px;
}

.growA-s {
  font-size: 14px;
}

.vsep {
  display: block;
  width: 1px;
  height: 26px;
  background-color: #9b9895;
  flex: none;
}

.vsep-t {
  height: 22px;
}

.i-clear { width: 15px; height: 17px; }

.font-r2 {
  display: flex;
  align-items: center;
  height: 24px;
  margin: 8px 0 0 8px;
}

.fb {
  width: 24px;
  display: flex;
  align-items: center;
  justify-content: center;
  font-size: 13.500px;
}

.fb-b { font-weight: 700; }
.fb-i { font-style: italic; }
.fb-u { text-decoration: underline; }
.fb-st { text-decoration: line-through; }
.fb-w { width: 36px; }
.fb-hl { width: 36px; }
.fb-col { width: 35px; margin-left: 8px; }

.i-hl { width: 16px; height: 18px; }

.uA {
  width: 16px;
  text-align: center;
  line-height: 15px;
  border-bottom: 4px solid #716e6c;
}

/* paragraph group */
.para-left {
  width: 189px;
  padding-top: 6px;
}

.para-r {
  display: flex;
  align-items: center;
  height: 24px;
}

.para-r svg:not(.ch) {
  color: #8a8784;
}

.para-r2 {
  margin-top: 9px;
}

.i-17 { width: 17px; height: 14px; }
.i-16 { width: 16px; height: 14px; }
.i-15 { width: 15px; height: 14px; }
.i-dist { width: 15px; height: 20px; }
.i-cols { width: 13px; height: 10px; }

/* drawing group */
.gallery {
  width: 136px;
  height: 61px;
  margin: 2px 0 0 10px;
}

.collapse {
  position: absolute;
  right: 10px;
  bottom: 5px;
  transform: rotate(180deg);
  width: 10px;
  height: 6px;
  color: #111;
}

/* work area */
.workspace {
  flex: 1;
  min-height: 0;
  display: flex;
  background-color: #666;
  border-bottom: 1px solid #3c3c3c;
}

.pane {
  width: 292px;
  flex: none;
  display: flex;
  align-items: flex-start;
  padding-top: 16px;
  border-right: 2px solid #9a9a9a;
}

.pane-num {
  width: 35px;
  padding-left: 14px;
  color: #f4f4f4;
  font-size: 15px;
  line-height: 14px;
}

.thumb {
  width: 235px;
  height: 136px;
  background-color: #fff;
  border: 3px solid #e58a7b;
  outline: 1px solid #555;
  outline-offset: -4px;
  padding: 1px;
}

.thumb svg {
  width: 100%;
  height: 100%;
}

.editor {
  flex: 1;
  min-width: 0;
  display: flex;
  flex-direction: column;
  border-bottom: 2px solid #a3a3a3;
}

.hruler {
  width: 1386px;
  height: 15px;
  margin: 4px 0 0 128px;
  padding-left: 16.500px;
  display: flex;
  align-items: center;
  border: 1px solid #4a4a4a;
  background:
    repeating-linear-gradient(90deg, transparent 0 9.750px, #cfcfcf 9.750px 10.750px, transparent 10.750px 20.500px) -4px center / 1500px 1px no-repeat,
    repeating-linear-gradient(90deg, transparent 0 20px, #cfcfcf 20px 21px, transparent 21px 41px) -4px center / 1500px 5px no-repeat,
    #6c6c6c;
  color: #f2f2f2;
  font-size: 13px;
}

.hruler span {
  width: 41px;
  flex: none;
  text-align: center;
  line-height: 13px;
  background: radial-gradient(closest-side, #6c6c6c 60%, transparent) center / 22px 13px no-repeat;
}

.stage {
  display: flex;
  align-items: flex-start;
  margin-top: 26px;
}

.vruler {
  width: 15px;
  height: 779px;
  margin-left: 6px;
  display: flex;
  flex-direction: column;
  border: 1px solid #4a4a4a;
  background:
    repeating-linear-gradient(180deg, transparent 0 9.750px, #cfcfcf 9.750px 10.750px, transparent 10.750px 20.500px) center -20.500px / 1px 1500px no-repeat,
    repeating-linear-gradient(180deg, transparent 0 20px, #cfcfcf 20px 21px, transparent 21px 41px) center -20.500px / 5px 1500px no-repeat,
    #6c6c6c;
  color: #f2f2f2;
  font-size: 13px;
}

.vruler span {
  height: 41px;
  flex: none;
  display: flex;
  align-items: center;
  justify-content: center;
  writing-mode: vertical-rl;
  transform: rotate(180deg);
  line-height: 13px;
}

.slide {
  width: 1387px;
  height: 779px;
  margin-left: 106px;
  background-color: #fff;
  box-shadow: 0 0 0 1px #8f8f8f;
}

.slide > svg {
  width: 100%;
  height: 100%;
}

.rung-label {
  font-family: "Liberation Mono", monospace;
  font-size: 34px;
  fill: #1a1a1a;
  stroke: #1a1a1a;
  stroke-width: 0.5px;
}

/* status bar */
.statusbar {
  height: 23px;
  flex: none;
  display: flex;
  align-items: center;
  background-color: #bfbbb7;
}

.st-text {
  color: #333;
  white-space: nowrap;
}

.st-tight {
  letter-spacing: -0.5px;
}

.i-book { width: 15px; height: 13px; margin-left: 11px; }

.st-right {
  margin-left: auto;
  display: flex;
  align-items: center;
  height: 100%;
  padding-right: 9px;
}

.i-notes { width: 17px; height: 16px; }
.i-cmt { width: 14px; height: 14px; margin-left: 19px; }

.viewbtn {
  width: 40px;
  height: 100%;
  display: flex;
  align-items: center;
  justify-content: center;
}

.viewbtn-on {
  margin-left: 19px;
  background-color: #a5a2a0;
}

.i-view { width: 14px; height: 13px; }

.zoom-sign {
  width: 18px;
  text-align: center;
  font-size: 14px;
  color: #333;
}

.zoom-track {
  position: relative;
  width: 100px;
  height: 1px;
  background-color: #7c7a78;
}

.zoom-track i {
  position: absolute;
  left: 48px;
  top: -5px;
  width: 5px;
  height: 11px;
  background-color: #6e6c6a;
}

.zoom-val {
  margin-left: 9px;
}

.i-fit { width: 15px; height: 15px; margin-left: 12px; }
```
